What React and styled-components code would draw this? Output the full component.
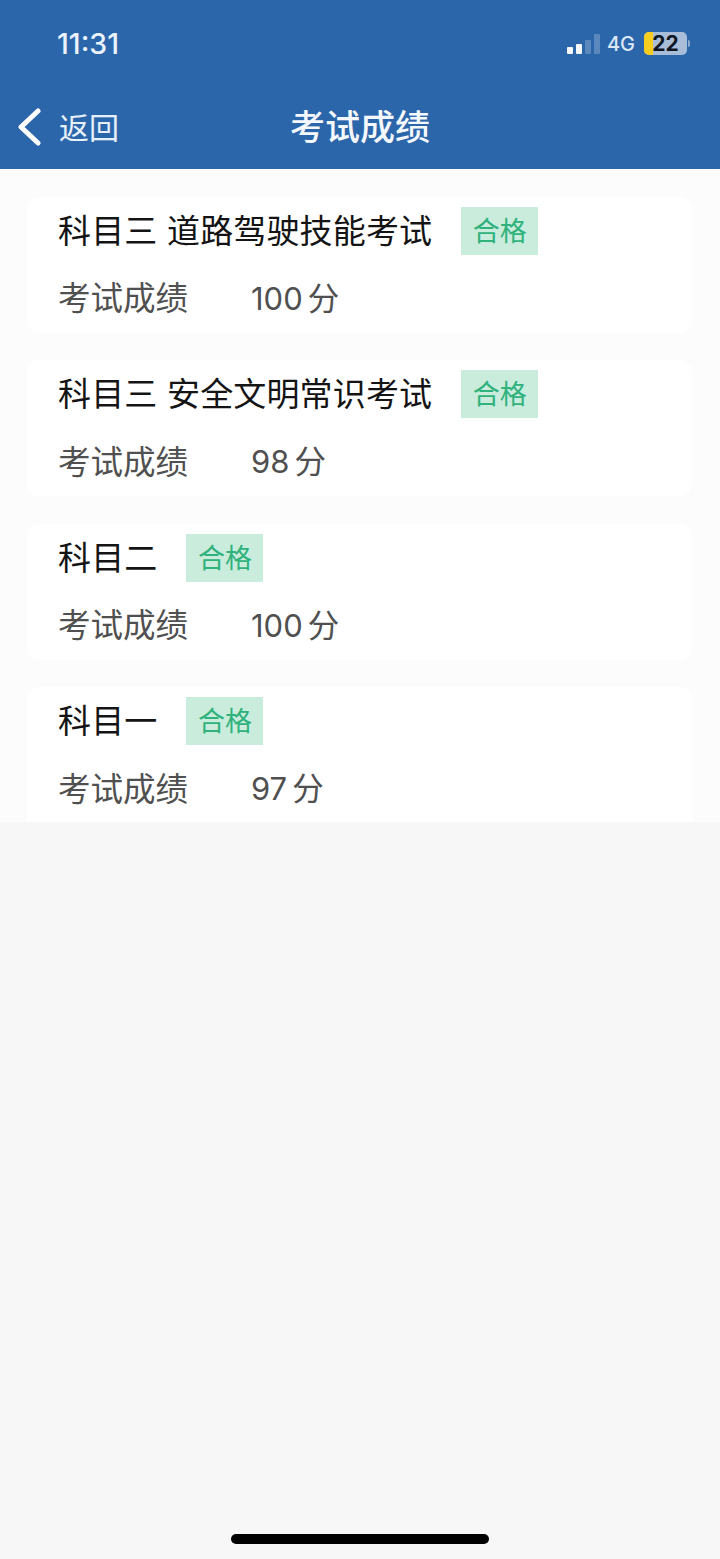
import styled, { createGlobalStyle } from 'styled-components'

const results = [
  { subject: '科目三 道路驾驶技能考试', score: 100 },
  { subject: '科目三 安全文明常识考试', score: 98 },
  { subject: '科目二', score: 100 },
  { subject: '科目一', score: 97 },
]

function App() {
  return (
    <Page>
      <GlobalStyle />
      <Header>
        <StatusBar>
          <Time>11:31</Time>
          <StatusIcons>
            <Signal>
              <SignalBar $height={7} $on />
              <SignalBar $height={10} $on />
              <SignalBar $height={14} />
              <SignalBar $height={20} />
            </Signal>
            <Network>4G</Network>
            <Battery>
              <BatteryLevel />
              <BatteryText>22</BatteryText>
            </Battery>
            <BatteryTip />
          </StatusIcons>
        </StatusBar>
        <NavBar>
          <BackButton>
            <svg width="26" height="38" viewBox="0 0 26 38" fill="none">
              <path d="M22 3 L5 19 L22 35" stroke="#fff" strokeWidth="5" strokeLinecap="round" strokeLinejoin="round" />
            </svg>
            <BackText>返回</BackText>
          </BackButton>
          <NavTitle>考试成绩</NavTitle>
        </NavBar>
      </Header>
      <List>
        {results.map((item, i) => (
          <Card key={i}>
            <CardTitle>
              <Subject>{item.subject}</Subject>
              <Badge>合格</Badge>
            </CardTitle>
            <ScoreRow>
              <ScoreLabel>考试成绩</ScoreLabel>
              <ScoreValue>{item.score}<ScoreUnit>分</ScoreUnit></ScoreValue>
            </ScoreRow>
          </Card>
        ))}
      </List>
      <HomeBar />
    </Page>
  )
}

const cjk = `"Noto Sans CJK SC", "Noto Sans", sans-serif`

const GlobalStyle = createGlobalStyle`
  html, body {
    margin: 0;
    padding: 0;
    background: #f7f7f7;
  }
`

const Page = styled.div`
  position: relative;
  display: flex;
  flex-direction: column;
  width: 720px;
  height: 1559px;
  background: #f7f7f7;
  font-family: ${cjk};
  overflow: hidden;
`

const Header = styled.header`
  display: flex;
  flex-direction: column;
  height: 169px;
  background: #2c66aa;
  color: #fff;
`

const StatusBar = styled.div`
  display: flex;
  align-items: center;
  justify-content: space-between;
  height: 87px;
  padding: 0 30px 0 57px;
`

const Time = styled.span`
  font-family: Inter, sans-serif;
  font-size: 28.5px;
  font-weight: 500;
  color: #eaf3fb;
`

const StatusIcons = styled.div`
  display: flex;
  align-items: center;
`

const Signal = styled.div`
  display: flex;
  align-items: flex-end;
  gap: 3px;
  height: 20px;
  margin-right: 7px;
`

const SignalBar = styled.i`
  width: 6px;
  height: ${props => props.$height}px;
  border-radius: 1px;
  background: ${props => props.$on ? '#f4f8fc' : '#5c89bd'};
`

const Network = styled.span`
  font-family: Inter, sans-serif;
  font-size: 20px;
  font-weight: 500;
  color: #dbe8f5;
  margin-right: 9px;
`

const Battery = styled.div`
  position: relative;
  display: flex;
  align-items: center;
  justify-content: center;
  width: 43px;
  height: 23px;
  border-radius: 5px;
  background: #a9bdd8;
  overflow: hidden;
`

const BatteryLevel = styled.div`
  position: absolute;
  left: 0;
  top: 0;
  bottom: 0;
  width: 9px;
  background: #f7ce1f;
`

const BatteryText = styled.span`
  position: relative;
  font-family: Inter, sans-serif;
  font-size: 21px;
  font-weight: 700;
  line-height: 23px;
  color: #0f1722;
`

const BatteryTip = styled.i`
  width: 2px;
  height: 7px;
  margin-left: 1px;
  border-radius: 0 2px 2px 0;
  background: #8fabcf;
`

const NavBar = styled.div`
  position: relative;
  display: flex;
  align-items: center;
  justify-content: center;
  height: 74px;
`

const BackButton = styled.div`
  position: absolute;
  left: 16px;
  top: 0;
  bottom: -6px;
  display: flex;
  align-items: center;
  gap: 17px;
`

const BackText = styled.span`
  margin-bottom: 2px;
  font-size: 30px;
  font-weight: 400;
  color: #e6f0f9;
`

const NavTitle = styled.h1`
  margin: 0;
  font-size: 35px;
  font-weight: 500;
  color: #f4f8fc;
`

const List = styled.div`
  display: flex;
  flex-direction: column;
  gap: 27.5px;
  height: 653px;
  padding: 27.6px 28px 0 27px;
  background: #fcfcfc;
  box-sizing: border-box;
  overflow: hidden;
`

const Card = styled.section`
  display: flex;
  flex: none;
  flex-direction: column;
  height: 136px;
  padding: 10px 31px 0;
  border-radius: 12px;
  background: #fff;
  box-sizing: border-box;

  &:last-child {
    border-radius: 12px 12px 0 0;
  }
`

const CardTitle = styled.div`
  display: flex;
  align-items: center;
  gap: 29px;
  height: 48px;
`

const Subject = styled.span`
  height: 48px;
  font-size: 33px;
  line-height: 45px;
  letter-spacing: 0.15px;
  word-spacing: 2px;
  color: #141414;
`

const Badge = styled.span`
  width: 77px;
  height: 48px;
  font-size: 27px;
  line-height: 46px;
  text-align: center;
  color: #2fb27c;
  background: #c9ecdd;
`

const ScoreRow = styled.div`
  display: flex;
  align-items: center;
  height: 50px;
  margin-top: 16px;
`

const ScoreLabel = styled.span`
  width: 193px;
  font-size: 32.5px;
  color: #505050;
`

const ScoreValue = styled.span`
  font-family: Inter, ${cjk};
  font-size: 31px;
  color: #505050;
`

const ScoreUnit = styled.span`
  margin-left: 5px;
  font-family: ${cjk};
  font-size: 31.5px;
`

const HomeBar = styled.div`
  position: absolute;
  left: 231px;
  bottom: 15px;
  width: 258px;
  height: 10px;
  border-radius: 5px;
  background: #000;
`

export default App
